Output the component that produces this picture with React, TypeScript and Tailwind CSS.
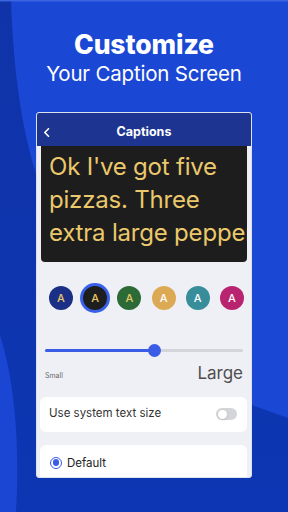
// App.tsx
// Store screenshot: "Customize your caption screen" with a phone-style settings card

const swatches = [
  { bg: "bg-[#1b2f86]", fg: "text-[#e9c766]" },
  { bg: "bg-[#1e1e1e]", fg: "text-[#e9c766]", selected: true },
  { bg: "bg-[#2c6a37]", fg: "text-[#e9c766]" },
  { bg: "bg-[#dcaa55]", fg: "text-white" },
  { bg: "bg-[#388d9b]", fg: "text-white" },
  { bg: "bg-[#b8246f]", fg: "text-white" },
];

export default function App() {
  return (
    <div className="relative w-[288px] h-[512px] overflow-hidden bg-[#1b47d5] font-['Inter',sans-serif]">
      <Backdrop />
      <div className="relative flex flex-col items-center pt-[28px]">
        <h1 className="text-[26.5px] leading-[32px] font-extrabold text-white tracking-[-0.1px]">
          Customize
        </h1>
        <p className="mt-[2px] text-[20.5px] leading-[24px] text-white tracking-[-0.2px]">
          Your Caption Screen
        </p>
        <PhoneCard />
      </div>
    </div>
  );
}

function Backdrop() {
  return (
    <svg className="absolute inset-0" width="288" height="512" viewBox="0 0 288 512">
      <defs>
        <linearGradient id="dk" x1="0" y1="0" x2="0" y2="1">
          <stop offset="0" stopColor="#1033a8" />
          <stop offset="1" stopColor="#0c36b3" />
        </linearGradient>
      </defs>
      <path
        d="M0 0 L11 0 C13 60 20 130 40 185 L252 405 L288 418 L288 512 L0 512 Z"
        fill="url(#dk)"
      />
      <path d="M0 335 C14 380 20 440 16 512 L0 512 Z" fill="#1a46d3" />
      <rect x="0" y="0" width="288" height="1.5" fill="#3a64e0" />
    </svg>
  );
}

function PhoneCard() {
  return (
    <div className="mt-[26px] w-[216px] h-[366px] overflow-hidden rounded-[3px] border border-[#dde2ee] bg-[#eff0f5] flex flex-col">
      {/* Header */}
      <div className="relative h-[33px] shrink-0 bg-[#1d3490] flex items-center justify-center pt-[5px]">
        <svg className="absolute left-[6px] top-[15px]" width="7" height="9" viewBox="0 0 7 9">
          <path d="M5.5 0.8 L1.8 4.5 L5.5 8.2" fill="none" stroke="white" strokeWidth="1.6" strokeLinecap="round" strokeLinejoin="round" />
        </svg>
        <span className="text-white text-[12.5px] font-bold">Captions</span>
      </div>

      {/* Caption preview */}
      <div className="mx-[4px] h-[116px] shrink-0 rounded-b-[4px] bg-[#1d1d1d] pl-[8px] pt-[4px] overflow-hidden">
        {["Ok I've got five", "pizzas. Three", "extra large pepperoni"].map((line) => (
          <div
            key={line}
            className="whitespace-nowrap text-[24px] leading-[33px] text-[#ebc86b] tracking-[-0.2px]"
          >
            {line}
          </div>
        ))}
      </div>

      {/* Colour swatches */}
      <div className="mt-[24px] flex pl-[12px] gap-[10.2px]">
        {swatches.map((s, i) => (
          <div
            key={i}
            className={`w-[24px] h-[24px] rounded-full flex items-center justify-center ${s.bg} ${
              s.selected ? "ring-[3px] ring-[#3860ea]" : ""
            }`}
          >
            <span className={`text-[11px] font-medium ${s.fg}`}>A</span>
          </div>
        ))}
      </div>

      {/* Size slider */}
      <div className="relative mt-[33.5px] ml-[8px] w-[198px] h-[13px]">
        <div className="absolute left-0 right-0 top-[5px] h-[3px] rounded-full bg-[#d3d5db]" />
        <div className="absolute left-0 w-[110px] top-[5px] h-[3px] rounded-full bg-[#3a5ce6]" />
        <div className="absolute left-[102.5px] top-0 w-[13px] h-[13px] rounded-full bg-[#3a5ce6]" />
      </div>
      <div className="mt-[6px] ml-[8px] w-[198px] flex items-end justify-between">
        <span className="text-[7px] leading-[9px] text-[#6b6b6b] mb-[3px]">Small</span>
        <span className="text-[17px] leading-[20px] text-[#4e4e4e]">Large</span>
      </div>

      {/* System text size */}
      <div className="mt-[14px] ml-[3px] mr-[4px] h-[35px] rounded-[6px] bg-white flex items-center justify-between pl-[9px] pr-[10px]">
        <span className="text-[11.5px] text-[#333]">Use system text size</span>
        <div className="w-[21px] h-[12px] rounded-full bg-[#d4d5d9] p-[1.5px]">
          <div className="w-[9px] h-[9px] rounded-full bg-white shadow-sm" />
        </div>
      </div>

      {/* Font option */}
      <div className="mt-[13px] ml-[3px] mr-[4px] flex-1 rounded-t-[6px] bg-white flex items-start pl-[10px] pt-[12px] gap-[5px]">
        <div className="w-[12px] h-[12px] rounded-full border-[1.5px] border-[#3a5ce6] flex items-center justify-center">
          <div className="w-[6.5px] h-[6.5px] rounded-full bg-[#3a5ce6]" />
        </div>
        <span className="text-[11.5px] leading-[12px] text-[#222]">Default</span>
      </div>
    </div>
  );
}
